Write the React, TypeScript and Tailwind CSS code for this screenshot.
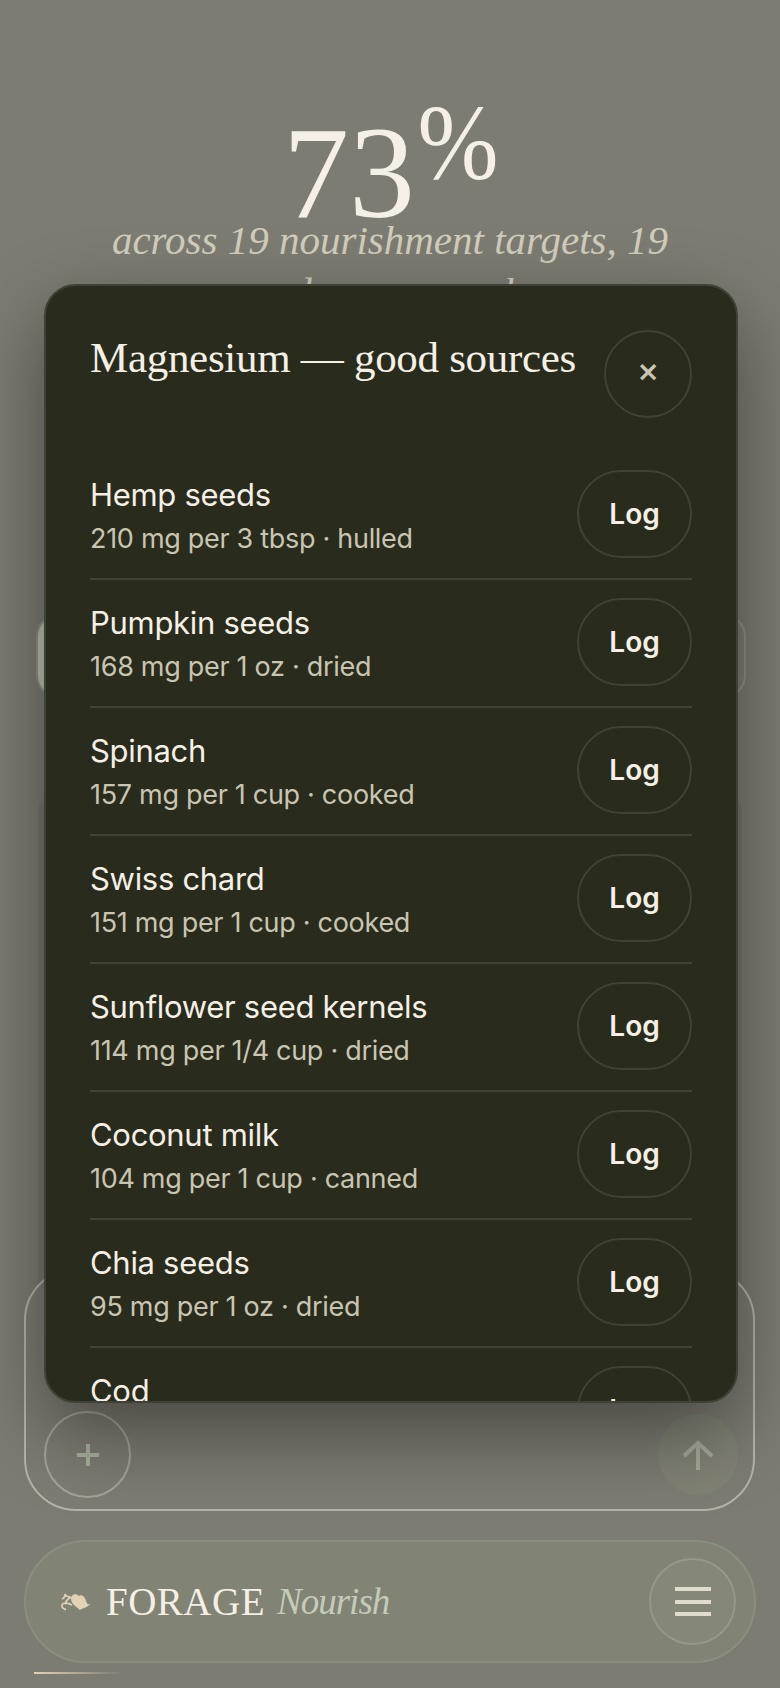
import React from 'react';

interface Source {
  name: string;
  detail: string;
}

const sources: Source[] = [
  { name: 'Hemp seeds', detail: '210 mg per 3 tbsp · hulled' },
  { name: 'Pumpkin seeds', detail: '168 mg per 1 oz · dried' },
  { name: 'Spinach', detail: '157 mg per 1 cup · cooked' },
  { name: 'Swiss chard', detail: '151 mg per 1 cup · cooked' },
  { name: 'Sunflower seed kernels', detail: '114 mg per 1/4 cup · dried' },
  { name: 'Coconut milk', detail: '104 mg per 1 cup · canned' },
  { name: 'Chia seeds', detail: '95 mg per 1 oz · dried' },
  { name: 'Cod', detail: '89 mg per 6 oz · baked' },
];

const serif = "font-['Liberation_Serif',serif]";
const sans = "font-['Inter',sans-serif]";

const SourceRow: React.FC<{ item: Source }> = ({ item }) => (
  <div className="flex items-start justify-between border-b-2 border-[#3f4236] pt-[18px] pb-[20px]">
    <div className="min-w-0 pt-[4px]">
      <div className="text-[31px] leading-[41px] tracking-[-0.3px] text-[#f4f0e6]">{item.name}</div>
      <div className="mt-[5px] text-[27px] leading-[38px] tracking-[-0.3px] text-[#c8c5b2]">{item.detail}</div>
    </div>
    <button className="h-[88px] w-[115px] shrink-0 rounded-[44px] border-2 border-[#3f4236] text-[28px] font-semibold text-[#f4f0e6]">
      Log
    </button>
  </div>
);

const SourcesModal: React.FC = () => (
  <div className={`absolute top-[284px] left-[44px] h-[1119px] w-[694px] overflow-hidden rounded-[32px] border-2 border-[#3e4236] bg-[#292b1d] px-[44px] shadow-[0_30px_80px_rgba(0,0,0,0.42)] ${sans}`}>
    <div className="flex items-start justify-between pt-[44px]">
      <h2 className={`pt-[4px] text-[43px] leading-[48px] tracking-[-0.3px] text-[#f4f0e6] ${serif}`}>Magnesium — good sources</h2>
      <button className="flex h-[88px] w-[88px] shrink-0 items-center justify-center rounded-full border-2 border-[#3f4236] pb-[10px] text-[34px] font-medium text-[#c8c5b2]">
        ×
      </button>
    </div>
    <div className="mt-[34px]">
      {sources.map((item) => (
        <SourceRow key={item.name} item={item} />
      ))}
    </div>
  </div>
);

export default function App() {
  return (
    <div className="relative flex h-[1688px] w-full flex-col overflow-hidden bg-[#7c7c72]">
      <div className={`flex h-[613px] flex-col items-center pt-[108px] ${serif}`}>
        <div className="flex h-[103px] items-start pl-[6px] text-[#f4f0e6]">
          <span className="text-[132px] leading-[130px]">73</span>
          <span className="-mt-[17px] -ml-[2px] text-[108px] leading-[104px] scale-x-90">%</span>
        </div>
        <p className="mt-[3px] w-[600px] text-center text-[41px] leading-[52px] italic text-[#d0cdbc]">
          across 19 nourishment targets, 19 are under your goal now
        </p>
      </div>

      <div className="ml-[36px] flex h-[86px] w-[710px] rounded-[24px] border-2 border-white/15">
        <div className="h-full w-[120px] rounded-[22px] bg-[#b8bfac]" />
      </div>

      <div className="mt-[87px] ml-[36px] h-[500px] w-[708px] rounded-t-[28px] border-2 border-b-0 border-white/5 bg-black/5" />

      <div className="absolute right-[25px] bottom-[177px] left-[24px] flex h-[243px] items-end justify-between rounded-[52px] border-2 border-[#b3b3a8] pr-[15px] pb-[11px] pl-[18px]">
        <button className="flex h-[87px] w-[87px] items-center justify-center rounded-full border-2 border-[#a2a498]">
          <svg width="24" height="24" viewBox="0 0 24 24" fill="none" stroke="#a9b09d" strokeWidth="4">
            <path d="M12 1v22M1 12h22" />
          </svg>
        </button>
        <button className="mb-[3px] flex h-[81px] w-[80px] items-center justify-center rounded-full bg-[#808274]">
          <svg width="32" height="30" viewBox="0 0 32 30" fill="none" stroke="#a3a898" strokeWidth="4">
            <path d="M16 30V3M2 16L16 3l14 13" />
          </svg>
        </button>
      </div>

      <div className="absolute right-[24px] bottom-[25px] left-[24px] flex h-[123px] items-center justify-between rounded-[62px] border-2 border-[#8b8d7f] bg-[#818375] pr-[18px] pl-[34px]">
        <div className={`flex items-center ${serif}`}>
          <svg className="mr-[14px]" width="32" height="18" viewBox="0 0 32 18" fill="#e2d2b5">
            <path d="M19 3C16 0 11 1 11 6C11 10 16 14 20 17C23 15 26 15 31 11C28 12 27 11 26 8C25 4 22 1 19 3z" />
            <path d="M12 12C8 10 3 9 2 12C1.500 14.500 3 16 6 16.500M2 6C4 5 5.500 3.500 5 1C6 3.500 9 4 11 4.500C8 5.500 6 8 5 11" fill="none" stroke="#e2d2b5" strokeWidth="1.8" />
          </svg>
          <span className="text-[39px] leading-none tracking-[0.5px] text-[#f4f0e6]">FORAGE</span>
          <span className="ml-[12px] text-[37px] leading-none tracking-[-1px] italic text-[#c5cbb9]">Nourish</span>
        </div>
        <button className="flex h-[87px] w-[87px] flex-col items-center justify-center gap-[8.5px] rounded-full border-2 border-[#959788] bg-[#858779]">
          <span className="h-[4px] w-[36px] bg-[#e0dccd]" />
          <span className="h-[4px] w-[36px] bg-[#e0dccd]" />
          <span className="h-[4px] w-[36px] bg-[#e0dccd]" />
        </button>
      </div>

      <div className="absolute bottom-[14px] left-[34px] h-[2px] w-[88px] bg-gradient-to-r from-[#e2d2b5] to-transparent" />

      <SourcesModal />
    </div>
  );
}
